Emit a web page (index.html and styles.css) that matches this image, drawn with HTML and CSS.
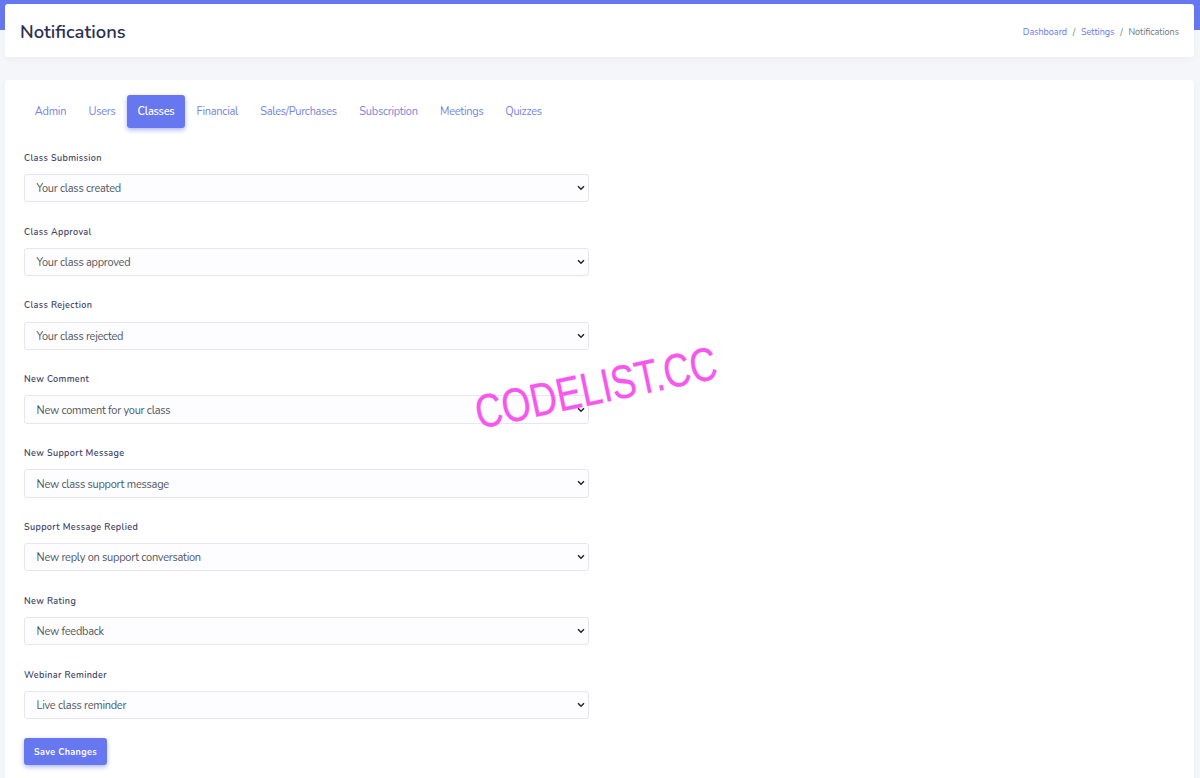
FILE: index.html
```
<!DOCTYPE html>
<html lang="en">
<head>
<meta charset="utf-8">
<title>Notifications</title>
<link rel="stylesheet" href="styles.css">
</head>
<body>
<main class="page">
  <header class="header">
    <h1 class="title">Notifications</h1>
    <nav class="crumbs"><a class="crumb">Dashboard</a><span class="slash">/</span><a class="crumb">Settings</a><span class="slash">/</span><span class="here">Notifications</span></nav>
  </header>
  <section class="card">
    <nav class="tabs">
      <a class="tab admin">Admin</a><a class="tab users">Users</a><a class="tab classes">Classes</a><a class="tab financial">Financial</a><a class="tab sales">Sales/Purchases</a><a class="tab subscription">Subscription</a><a class="tab meetings">Meetings</a><a class="tab quizzes">Quizzes</a>
    </nav>
    <form class="form">
      <div class="field"><label class="label">Class Submission</label><div class="select"><span>Your class created</span><svg class="arrow" viewBox="0 0 8 6"><path d="M1 1.2 4 4.2 7 1.2"/></svg></div></div>
      <div class="field"><label class="label">Class Approval</label><div class="select"><span>Your class approved</span><svg class="arrow" viewBox="0 0 8 6"><path d="M1 1.2 4 4.2 7 1.2"/></svg></div></div>
      <div class="field"><label class="label">Class Rejection</label><div class="select"><span>Your class rejected</span><svg class="arrow" viewBox="0 0 8 6"><path d="M1 1.2 4 4.2 7 1.2"/></svg></div></div>
      <div class="field"><label class="label">New Comment</label><div class="select"><span>New comment for your class</span><svg class="arrow" viewBox="0 0 8 6"><path d="M1 1.2 4 4.2 7 1.2"/></svg></div></div>
      <div class="field"><label class="label">New Support Message</label><div class="select"><span>New class support message</span><svg class="arrow" viewBox="0 0 8 6"><path d="M1 1.2 4 4.2 7 1.2"/></svg></div></div>
      <div class="field"><label class="label">Support Message Replied</label><div class="select"><span>New reply on support conversation</span><svg class="arrow" viewBox="0 0 8 6"><path d="M1 1.2 4 4.2 7 1.2"/></svg></div></div>
      <div class="field"><label class="label">New Rating</label><div class="select"><span>New feedback</span><svg class="arrow" viewBox="0 0 8 6"><path d="M1 1.2 4 4.2 7 1.2"/></svg></div></div>
      <div class="field"><label class="label">Webinar Reminder</label><div class="select"><span>Live class reminder</span><svg class="arrow" viewBox="0 0 8 6"><path d="M1 1.2 4 4.2 7 1.2"/></svg></div></div>
      <button class="save" type="button">Save Changes</button>
    </form>
  </section>
</main>
<svg class="watermark" viewBox="0 0 260 100"><text x="9" y="96" textLength="246" lengthAdjust="spacingAndGlyphs" transform="rotate(-12 9 96)">CODELIST.CC</text></svg>
</body>
</html>
```
FILE: styles.css
```
* { box-sizing: border-box; }
body {
  margin: 0;
  height: 778px;
  overflow: hidden;
  background: linear-gradient(#6777ef 0 30px, #f4f6f9 30px);
  font-family: Nunito, Lato, "Open Sans", sans-serif;
  color: #6c757d;
}
.page { padding: 4px 6px 0 5px; }
.header {
  height: 53px;
  padding: 0 15px;
  display: flex;
  align-items: center;
  justify-content: space-between;
  background: #fff;
  border-radius: 3px;
  box-shadow: 0 3px 6px rgba(0, 0, 0, .03);
}
.title {
  margin: 2px 0 0;
  font-size: 18.4px;
  line-height: 24px;
  font-weight: 600;
  color: #2b3050;
}
.crumbs { display: flex; font-size: 9px; line-height: 12px; padding-top: 2px; }
.crumb { color: #6777ef; }
.slash { width: 14px; text-align: center; }
.card {
  height: 720px;
  margin-top: 23px;
  padding: 15px 19px;
  background: #fff;
  border-radius: 3px;
  box-shadow: 0 3px 6px rgba(0, 0, 0, .03);
}
.tabs { display: flex; height: 32.5px; }
.tab {
  display: flex;
  align-items: center;
  justify-content: center;
  font-size: 11px;
  letter-spacing: -.26px;
  color: #7684dc;
}
.admin { width: 53px; }
.users { width: 50px; }
.classes {
  width: 58px;
  color: #fff;
  font-weight: 600;
  background: #6777ef;
  border-radius: 3px;
  box-shadow: 0 2px 5px #acb5f6;
}
.financial { width: 64.5px; }
.sales { width: 98px; }
.subscription { width: 82px; }
.meetings { width: 64.5px; }
.quizzes { width: 59px; }
.form { width: 565px; padding-top: 23.2px; }
.field { height: 73.86px; }
.label {
  display: block;
  height: 23.1px;
  font-size: 9px;
  line-height: 14px;
  font-weight: 600;
  letter-spacing: .37px;
  color: #3d4263;
}
.select {
  height: 28.4px;
  padding: 0 3px 0 11.5px;
  display: flex;
  align-items: center;
  justify-content: space-between;
  border: 1px solid #e4e6f5;
  border-radius: 3px;
  background: #fdfdff;
  font-size: 11px;
  letter-spacing: -.26px;
  color: #50575e;
}
.select span { padding-top: 1.2px; }
.arrow { width: 8px; height: 6px; fill: none; stroke: #26262a; stroke-width: 1.5; }
.save {
  display: block;
  width: 83px;
  height: 27px;
  margin-top: -3.4px;
  padding: 0;
  border: 0;
  border-radius: 3px;
  background: #6777ef;
  box-shadow: 0 2px 5px #acb5f6;
  color: #fff;
  font: 700 9px Nunito, Lato, sans-serif;
  letter-spacing: .35px;
}
.watermark { position: absolute; left: 470px; top: 333px; width: 260px; height: 100px; overflow: visible; }
.watermark text { font: 47px "Liberation Sans", Arial, sans-serif; fill: #f857ee; stroke: #f857ee; stroke-width: .3; }
```
